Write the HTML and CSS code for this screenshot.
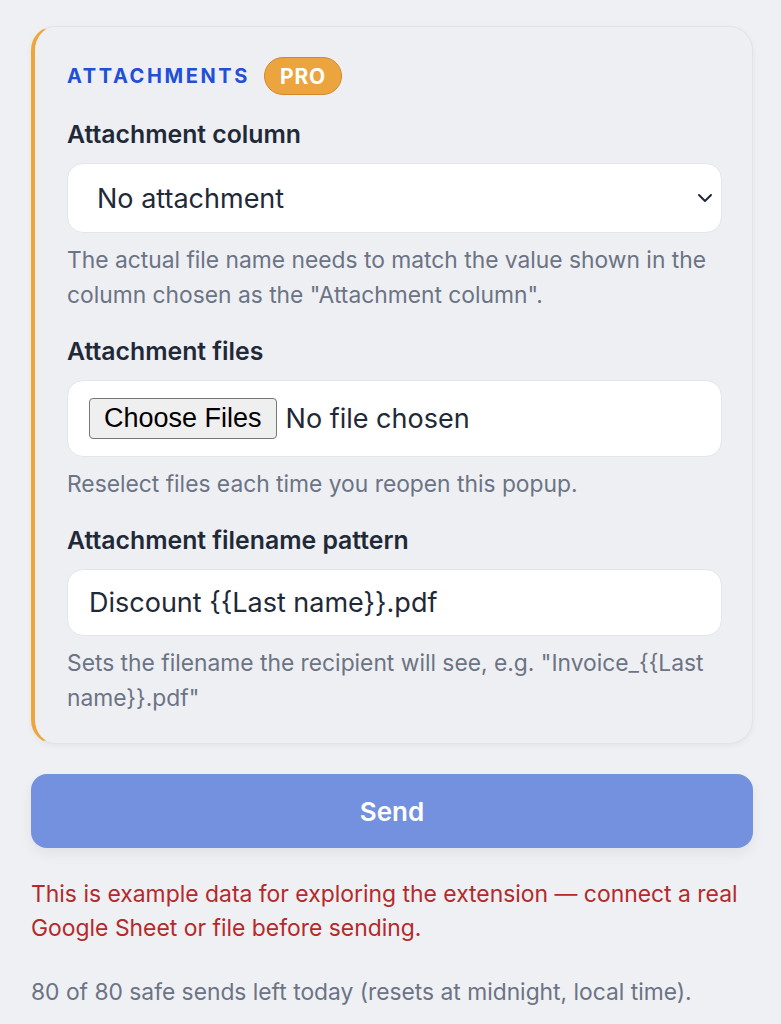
FILE: index.html
```html
<!DOCTYPE html>
<html lang="en">
<head>
    <meta charset="UTF-8">
    <meta name="viewport" content="width=device-width, initial-scale=1.0">
    <title>Send</title>
    <link rel="stylesheet" href="styles.css">
</head>
<body>

    <section class="card">
        <div class="card-head">
            <h2 class="card-title">Attachments</h2>
            <span class="badge">PRO</span>
        </div>

        <label class="field-label" for="attachment-column">Attachment column</label>
        <div class="select-wrap">
            <select id="attachment-column" class="field-select">
                <option>No attachment</option>
            </select>
            <svg class="chevron" width="16" height="10" viewBox="0 0 16 10">
                <path d="M2 2l6 6 6-6" fill="none" stroke="#1f2937" stroke-width="2" stroke-linecap="round" stroke-linejoin="round"/>
            </svg>
        </div>
        <p class="help">The actual file name needs to match the value shown in the column chosen as the "Attachment column".</p>

        <label class="field-label">Attachment files</label>
        <div class="file-box">
            <button class="file-btn" type="button">Choose Files</button>
            <span class="file-name">No file chosen</span>
        </div>
        <p class="help">Reselect files each time you reopen this popup.</p>

        <label class="field-label" for="filename-pattern">Attachment filename pattern</label>
        <input id="filename-pattern" class="field-input" type="text" value="Discount {{Last name}}.pdf">
        <p class="help">Sets the filename the recipient will see, e.g. "Invoice_{{Last name}}.pdf"</p>
    </section>

    <button class="send-btn" type="button">Send</button>

    <p class="warning">This is example data for exploring the extension — connect a real Google Sheet or file before sending.</p>

    <p class="quota">80 of 80 safe sends left today (resets at midnight, local time).</p>

</body>
</html>
```

FILE: styles.css
```css
* {
    margin: 0;
    padding: 0;
    box-sizing: border-box;
}
body {
    background-color: #eff0f4;
    font-family: Inter, "Noto Sans", sans-serif;
    color: #1f2937;
    padding: 26px 28px 0 31px;
}
.card {
    background-color: #eeeff3;
    border: 1px solid #e1e3e8;
    border-left: 4px solid #eea53b;
    border-radius: 24px;
    box-shadow: 0 2px 6px rgba(0, 0, 0, 0.05);
    padding: 30px 30px 28px 32px;
    display: flex;
    flex-direction: column;
}
.card-head {
    display: flex;
    align-items: center;
    gap: 14px;
    margin-bottom: 23px;
}
.card-title {
    font-size: 20px;
    font-weight: 700;
    letter-spacing: 2.6px;
    text-transform: uppercase;
    color: #1f50d6;
}
.badge {
    height: 38px;
    padding: 0 15px;
    display: flex;
    align-items: center;
    border-radius: 19px;
    background-color: #eca43e;
    border: 1.5px solid #d8862c;
    color: #fff;
    font-size: 21px;
    font-weight: 700;
    letter-spacing: 0.8px;
}
.field-label {
    font-size: 24.8px;
    font-weight: 600;
    line-height: 32px;
    margin-bottom: 13px;
}
.select-wrap {
    position: relative;
}
.field-select {
    appearance: none;
    -webkit-appearance: none;
    width: 100%;
    height: 70px;
    background-color: #fff;
    border: 1px solid #e3e5ea;
    border-radius: 16px;
    padding: 0 29px;
    font-family: inherit;
    font-size: 27px;
    color: #1f2937;
}
.chevron {
    position: absolute;
    right: 9px;
    top: 30px;
}
.help {
    font-size: 22.8px;
    line-height: 35px;
    color: #6b7384;
    margin-top: 9px;
    margin-bottom: 23px;
}
.card .help:last-child {
    margin-bottom: 0;
}
.file-box {
    height: 77px;
    background-color: #fff;
    border: 1px solid #e3e5ea;
    border-radius: 16px;
    padding: 0 21px;
    display: flex;
    align-items: center;
    gap: 9px;
}
.file-btn {
    height: 41px;
    padding: 0 14px;
    font-family: "Liberation Sans", Arial, sans-serif;
    font-size: 27px;
    color: #000;
    background-color: #efefef;
    border: 1.5px solid #767676;
    border-radius: 4px;
}
.file-name {
    font-size: 27px;
    color: #1f2937;
}
.field-input {
    width: 100%;
    height: 67px;
    background-color: #fff;
    border: 1px solid #e3e5ea;
    border-radius: 16px;
    padding: 0 21px;
    font-family: inherit;
    font-size: 27px;
    color: #1f2937;
}
.send-btn {
    display: block;
    width: 100%;
    height: 74px;
    margin-top: 30px;
    background-color: #7491df;
    border: none;
    border-radius: 16px;
    box-shadow: 0 6px 14px rgba(0, 0, 0, 0.06);
    color: #fff;
    font-family: inherit;
    font-size: 26px;
    font-weight: 600;
}
.warning {
    margin-top: 29px;
    font-size: 22.9px;
    line-height: 34px;
    color: #b42a2a;
}
.quota {
    margin-top: 30px;
    font-size: 22.8px;
    line-height: 34px;
    color: #6b7384;
}
```
